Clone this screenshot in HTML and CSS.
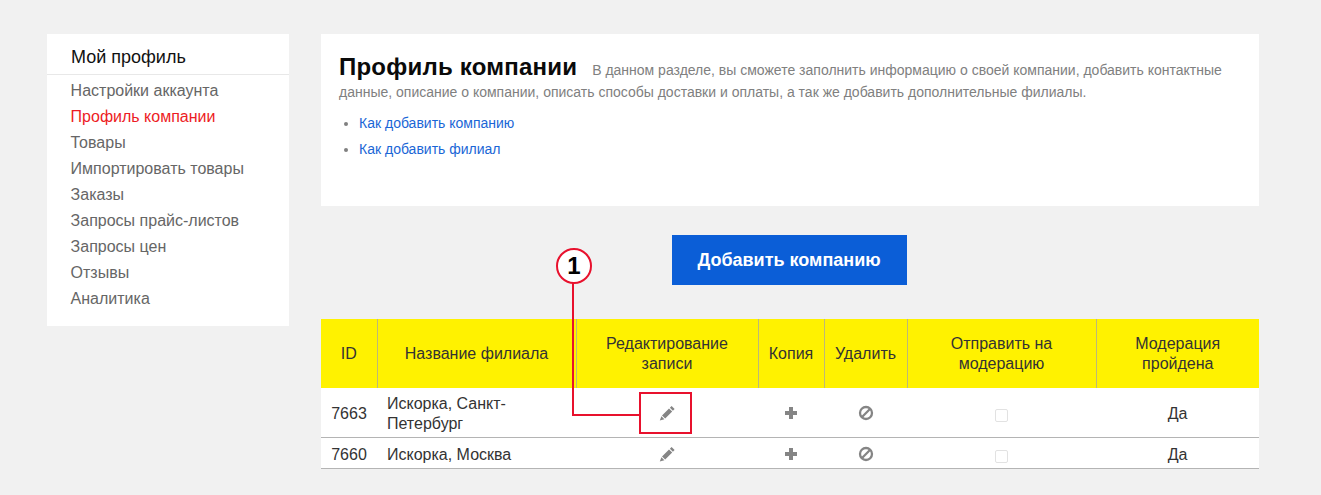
FILE: index.html
```html
<!DOCTYPE html>
<html lang="ru">
<head>
<meta charset="utf-8">
<title>Профиль компании</title>
<link rel="stylesheet" href="styles.css">
</head>
<body>
<div class="page">
  <aside class="sidebar">
    <div class="side-title">Мой профиль</div>
    <nav class="side-nav">
      <a>Настройки аккаунта</a>
      <a class="active">Профиль компании</a>
      <a>Товары</a>
      <a>Импортировать товары</a>
      <a>Заказы</a>
      <a>Запросы прайс-листов</a>
      <a>Запросы цен</a>
      <a>Отзывы</a>
      <a>Аналитика</a>
    </nav>
  </aside>
  <main class="main">
    <section class="intro">
      <p class="intro-text"><span class="intro-title">Профиль компании</span>В данном разделе, вы сможете заполнить информацию о своей компании, добавить контактные данные, описание о компании, описать способы доставки и оплаты, а так же добавить дополнительные филиалы.</p>
      <ul class="links">
        <li><a>Как добавить компанию</a></li>
        <li><a>Как добавить филиал</a></li>
      </ul>
    </section>
    <div class="action"><button class="add-btn">Добавить компанию</button></div>
    <table class="grid">
      <colgroup>
        <col class="c-id"><col class="c-name"><col class="c-edit"><col class="c-copy"><col class="c-del"><col class="c-send"><col class="c-mod">
      </colgroup>
      <thead>
        <tr>
          <th>ID</th><th>Название филиала</th><th>Редактирование записи</th><th>Копия</th><th>Удалить</th><th>Отправить на модерацию</th><th>Модерация пройдена</th>
        </tr>
      </thead>
      <tbody>
        <tr class="row-tall">
          <td>7663</td>
          <td class="name">Искорка, Санкт-Петербург</td>
          <td><svg class="ico" viewBox="0 0 16 16"><path d="M12.6 1l3 3-1.7 1.7-3-3zM10 3.4l3.2 3.2-7 7-3.2-3.2zM2.4 11.2l3 3-4.6 1.4z"/></svg></td>
          <td><svg class="ico" viewBox="0 0 16 16"><path d="M6 2h4v4h4v4h-4v4H6v-4H2V6h4z"/></svg></td>
          <td><svg class="ico" viewBox="0 0 16 16"><circle class="ring" cx="8" cy="8" r="6"/><path class="slash" d="M3.8 12.2l8.4-8.4"/></svg></td>
          <td><span class="check"></span></td>
          <td>Да</td>
        </tr>
        <tr class="row-short">
          <td>7660</td>
          <td class="name">Искорка, Москва</td>
          <td><svg class="ico" viewBox="0 0 16 16"><path d="M12.6 1l3 3-1.7 1.7-3-3zM10 3.4l3.2 3.2-7 7-3.2-3.2zM2.4 11.2l3 3-4.6 1.4z"/></svg></td>
          <td><svg class="ico" viewBox="0 0 16 16"><path d="M6 2h4v4h4v4h-4v4H6v-4H2V6h4z"/></svg></td>
          <td><svg class="ico" viewBox="0 0 16 16"><circle class="ring" cx="8" cy="8" r="6"/><path class="slash" d="M3.8 12.2l8.4-8.4"/></svg></td>
          <td><span class="check"></span></td>
          <td>Да</td>
        </tr>
      </tbody>
    </table>
  </main>
</div>
<div class="callout-line"></div>
<div class="callout-box"></div>
<div class="callout-num">1</div>
</body>
</html>
```
FILE: styles.css
```css
* { box-sizing: border-box; }
html, body { margin: 0; height: 100%; }
body {
  background: #f1f1f1;
  font-family: "Liberation Sans", Arial, sans-serif;
  color: #333;
  position: relative;
  overflow: hidden;
}
.page {
  display: flex;
  align-items: flex-start;
  gap: 32px;
  padding: 34px 62px 0 47px;
}
.sidebar {
  width: 242px;
  height: 292px;
  flex: none;
  background: #fff;
}
.side-title {
  height: 41px;
  padding: 13px 24px 0;
  font-size: 18px;
  line-height: 21px;
  color: #111;
  border-bottom: 1px solid #e8e8e8;
}
.side-nav { display: flex; flex-direction: column; padding: 3px 24px 0 23.6px; }
.side-nav a { font-size: 16px; line-height: 26px; color: #666; }
.side-nav a.active { color: #ed1c24; }
.main { width: 938px; flex: none; }
.intro {
  height: 172px;
  background: #fff;
  padding: 22px 18px 0;
}
.intro-text {
  margin: 0;
  font-size: 14px;
  line-height: 22px;
  color: #808080;
}
.intro-title {
  font-size: 24px;
  font-weight: bold;
  color: #0a0a0a;
  letter-spacing: 0.22px;
  margin-right: 15px;
}
.links {
  margin: 7px 0 0;
  padding: 0 0 0 20px;
  list-style: disc;
  color: #808080;
  font-size: 14px;
  line-height: 26px;
}
.links a { color: #1a66d6; }
.action { display: flex; justify-content: center; padding: 29px 2px 34px 0; }
.add-btn {
  width: 235px;
  height: 50px;
  border: 0;
  background: #0b5ed7;
  color: #fff;
  font: bold 18px "Liberation Sans", Arial, sans-serif;
}
.grid {
  width: 938px;
  border-collapse: collapse;
  table-layout: fixed;
  background: #fff;
  font-size: 16px;
  line-height: 20px;
}
.c-id { width: 56px; }
.c-name { width: 199px; }
.c-edit { width: 182px; }
.c-copy { width: 66px; }
.c-del { width: 83px; }
.c-send { width: 189px; }
.c-mod { width: 163px; }
.grid th {
  height: 69px;
  padding: 0 10px;
  background: #fff200;
  font-weight: normal;
  color: #333;
  border-left: 1px solid #bdb878;
  text-align: center;
}
.grid th:first-child { border-left: 0; }
.grid td {
  padding: 3px 10px 0;
  text-align: center;
  border-bottom: 1px solid #b4b4b4;
  color: #333;
  vertical-align: middle;
}
.grid .row-tall td { height: 49px; }
.grid .row-short td { height: 31px; padding-top: 5px; }
.grid td.name { text-align: left; }
.ico { display: block; width: 16px; height: 16px; margin: -3px auto 0; fill: #858585; }
.row-tall .ico { margin-top: -1px; }
.ring { fill: none; stroke: #858585; stroke-width: 2.3; }
.slash { fill: none; stroke: #858585; stroke-width: 2.3; }
.check {
  display: block;
  width: 13px;
  height: 13px;
  margin: 2px auto 0;
  border: 1px solid #e2e2e2;
  border-radius: 2px;
  background: #fff;
}
.row-tall .check { margin-top: 4px; }
.callout-line {
  position: absolute;
  left: 572px;
  top: 280px;
  width: 69px;
  height: 136px;
  border-left: 2px solid #e8112d;
  border-bottom: 2px solid #e8112d;
}
.callout-box {
  position: absolute;
  left: 639px;
  top: 392px;
  width: 53px;
  height: 42px;
  border: 2px solid #e8112d;
}
.callout-num {
  position: absolute;
  left: 556px;
  top: 248px;
  width: 36px;
  height: 36px;
  border: 2px solid #e8112d;
  border-radius: 50%;
  background: #fff;
  color: #000;
  font-size: 24px;
  font-weight: bold;
  line-height: 32px;
  text-align: center;
}
```
